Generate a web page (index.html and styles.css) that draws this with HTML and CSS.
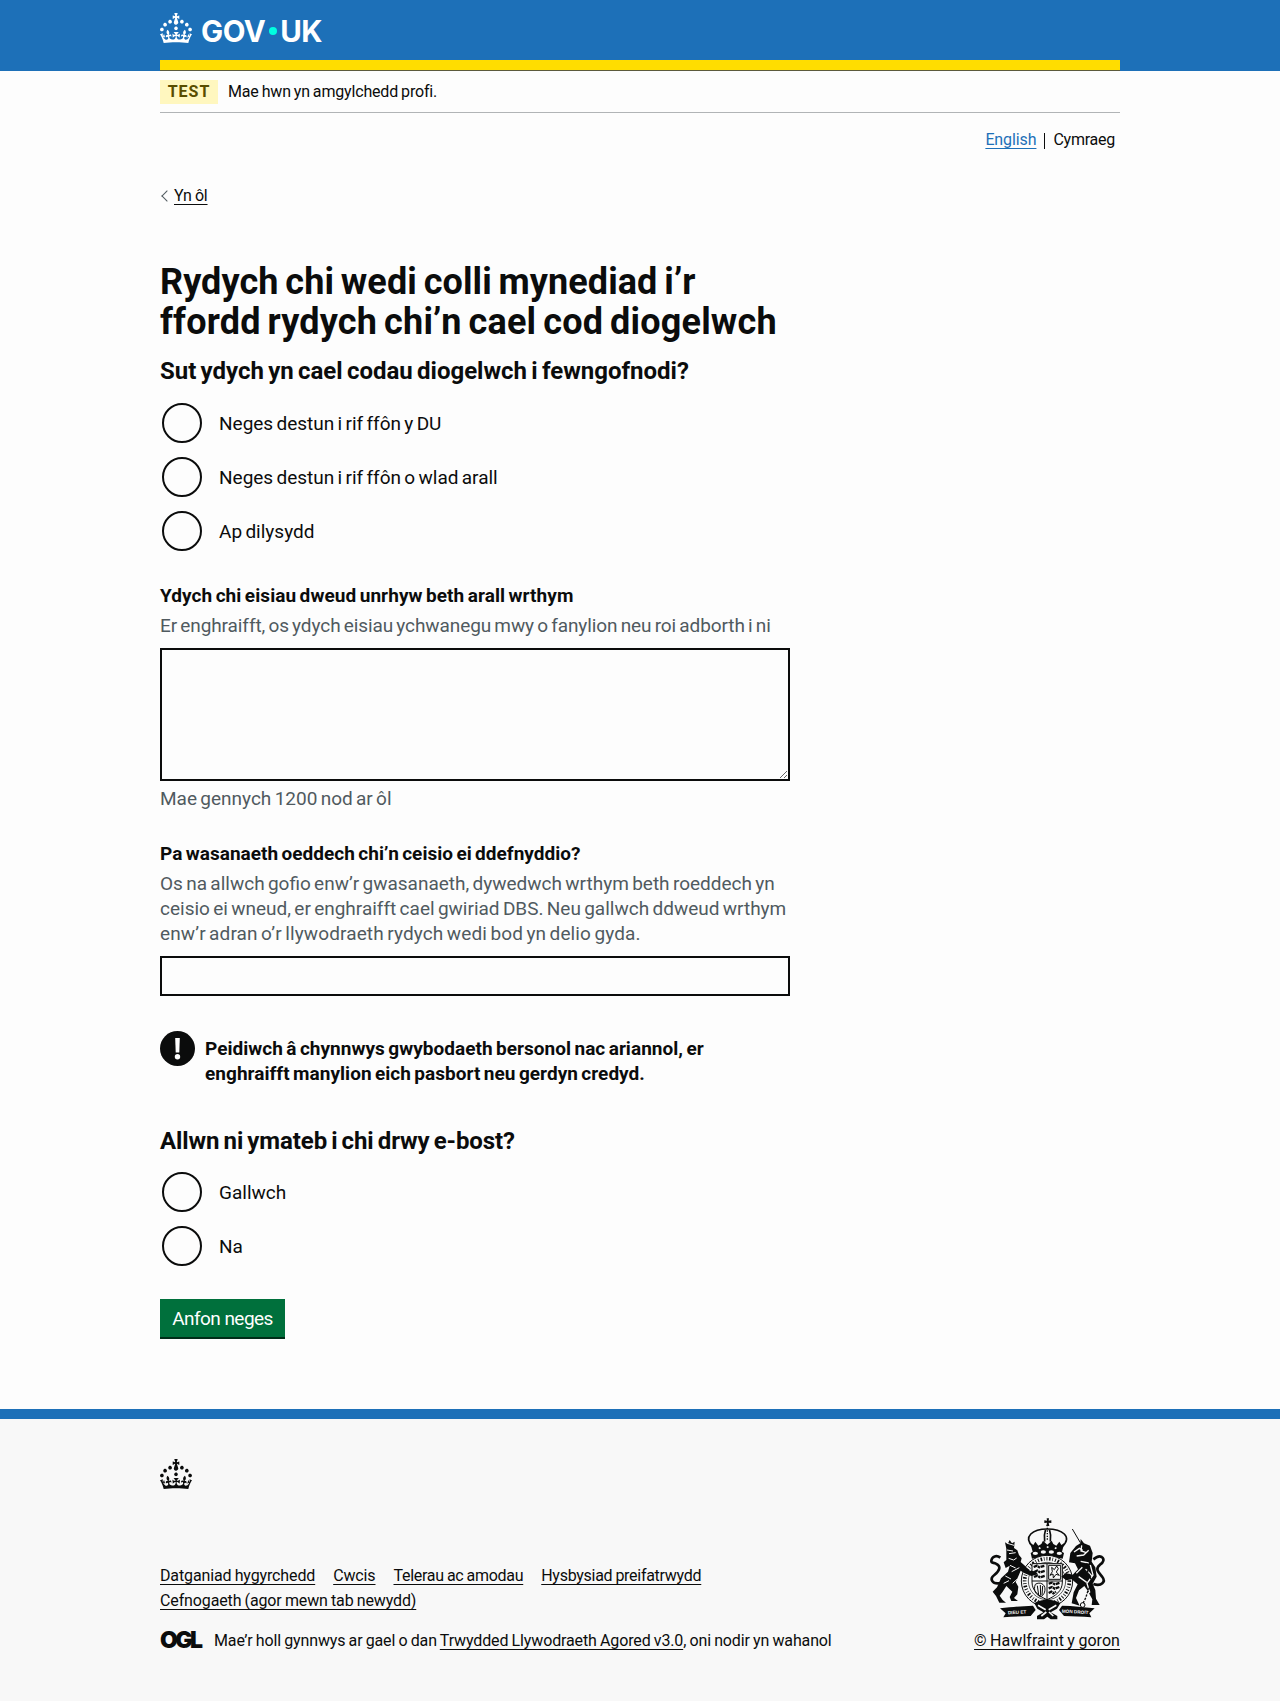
FILE: index.html
```html
<!DOCTYPE html>
<html lang="cy">
<head>
<meta charset="utf-8">
<title>Rydych chi wedi colli mynediad - GOV.UK</title>
<link rel="stylesheet" href="styles.css">
</head>
<body>
<svg class="defs" aria-hidden="true">
  <symbol id="crown" viewBox="0 0 32 30"><path d="M22.6 10.4c-1 .4-2-.1-2.4-1-.4-.9.1-2 1-2.4.9-.4 2 .1 2.4 1s-.1 2-1 2.4m-5.9 6.7c-.9.4-2-.1-2.4-1-.4-.9.1-2 1-2.4.9-.4 2 .1 2.4 1s-.1 2-1 2.4m10.8-3.7c-1 .4-2-.1-2.4-1-.4-.9.1-2 1-2.4.9-.4 2 .1 2.4 1s0 2-1 2.4m3.3 4.8c-1 .4-2-.1-2.4-1-.4-.9.1-2 1-2.4.9-.4 2 .1 2.4 1s-.1 2-1 2.4M17 4.7l2.3 1.2V2.5l-2.3.7-.2-.2.9-3h-3.4l.9 3-.2.2c-.1.1-2.3-.7-2.3-.7v3.4L15 4.7c.1.1.1.2.2.2l-1.3 4c-.1.2-.1.4-.1.6 0 1.1.8 2 1.9 2.2h.7c1-.2 1.9-1.1 1.9-2.1 0-.2 0-.4-.1-.6l-1.3-4c-.1-.2 0-.2.1-.3m-7.6 5.7c.9.4 2-.1 2.4-1 .4-.9-.1-2-1-2.4-.9-.4-2 .1-2.4 1s0 2 1 2.4m-5 3c.9.4 2-.1 2.4-1 .4-.9-.1-2-1-2.4-.9-.4-2 .1-2.4 1s.1 2 1 2.4m-3.2 4.8c.9.4 2-.1 2.4-1 .4-.9-.1-2-1-2.4-.9-.4-2 .1-2.4 1s0 2 1 2.4m14.8 11c4.4 0 8.6.3 12.3.8 1.1-4.5 2.4-7 3.7-8.8l-2.5-.9c.2 1.3.3 1.9 0 2.7-.4-.4-.8-1.1-1.1-2.3l-1.2 4c.7-.5 1.3-.8 2-.9-1.1 2.5-2.6 3.1-3.5 3-1.1-.2-1.7-1.2-1.5-2.1.3-1.2 1.5-1.5 2.1-.1 1.1-2.3-.8-3-2-2.3 1.9-1.9 2.1-3.5.6-5.6-2.1 1.6-2.1 3.2-1.2 5.5-1.2-1.4-3.2-.6-2.5 1.6.9-1.4 2.1-.5 1.9.8-.2 1.1-1.7 2.1-3.5 1.9-2.7-.2-2.9-2.1-2.9-3.6.7-.1 1.9.5 2.9 1.9l.4-4.3c-1.1 1.1-2.1 1.4-3.2 1.4.4-1.2 2.1-3 2.1-3h-5.4s1.7 1.9 2.1 3c-1.1 0-2.1-.2-3.2-1.4l.4 4.3c1-1.4 2.2-2 2.9-1.9-.1 1.5-.2 3.4-2.9 3.6-1.9.2-3.4-.8-3.5-1.9-.2-1.3 1-2.2 1.9-.8.7-2.3-1.2-3-2.5-1.6.9-2.2.9-3.9-1.2-5.5-1.5 2-1.3 3.7.6 5.6-1.2-.7-3.1 0-2 2.3.6-1.4 1.8-1.1 2.1.1.2.9-.3 1.9-1.5 2.1-.9.2-2.4-.5-3.5-3 .6 0 1.2.3 2 .9l-1.2-4c-.3 1.1-.7 1.9-1.1 2.3-.3-.8-.2-1.4 0-2.7l-2.9.9C1.3 23 2.6 25.5 3.7 30c3.7-.5 7.9-.8 12.3-.8"/></symbol>
</svg>

<header class="header">
  <div class="container header-inner">
    <a class="logo" href="#">
      <svg class="crown"><use href="#crown"/></svg>
      <span class="logo-text"><span>GOV</span><i class="logo-dot"></i><span>UK</span></span>
    </a>
  </div>
</header>

<div class="container">
  <div class="phase-banner">
    <strong class="tag">TEST</strong>
    <span class="phase-text">Mae hwn yn amgylchedd profi.</span>
  </div>
  <nav class="languages">
    <a class="language-link" href="#">English</a>
    <span class="language-current">Cymraeg</span>
  </nav>
  <a class="back" href="#"><i class="chevron"></i><span>Yn ôl</span></a>

  <main class="main">
    <h1><span>Rydych chi wedi colli mynediad i’r</span><br><span class="wide">ffordd rydych chi’n cael cod diogelwch</span></h1>

    <h2>Sut ydych yn cael codau diogelwch i fewngofnodi?</h2>
    <div class="radios">
      <label class="radio"><input type="radio" name="method"><span>Neges destun i rif ffôn y DU</span></label>
      <label class="radio"><input type="radio" name="method"><span>Neges destun i rif ffôn o wlad arall</span></label>
      <label class="radio"><input type="radio" name="method"><span>Ap dilysydd</span></label>
    </div>

    <div class="group">
      <label class="label label-wide" for="more">Ydych chi eisiau dweud unrhyw beth arall wrthym</label>
      <p class="hint hint-tight">Er enghraifft, os ydych eisiau ychwanegu mwy o fanylion neu roi adborth i ni</p>
      <textarea id="more" rows="5"></textarea>
      <p class="hint count">Mae gennych 1200 nod ar ôl</p>
    </div>

    <div class="group">
      <label class="label" for="service">Pa wasanaeth oeddech chi’n ceisio ei ddefnyddio?</label>
      <p class="hint">Os na allwch gofio enw’r gwasanaeth, dywedwch wrthym beth roeddech yn<br>ceisio ei wneud, er enghraifft cael gwiriad DBS. Neu gallwch ddweud wrthym<br><span class="hint-wide">enw’r adran o’r llywodraeth rydych wedi bod yn delio gyda.</span></p>
      <input class="text-input" id="service" type="text">
    </div>

    <div class="warning">
      <svg class="warning-icon" viewBox="0 0 35 35"><circle cx="17.5" cy="17.5" r="17.5"/><path d="M15.2 7h4.6l-.5 14.6h-3.6z" fill="#fff"/><circle cx="17.5" cy="25.8" r="2.7" fill="#fff"/></svg>
      <strong>Peidiwch â chynnwys gwybodaeth bersonol nac ariannol, er<br>enghraifft manylion eich pasbort neu gerdyn credyd.</strong>
    </div>

    <h2 class="reply-title">Allwn ni ymateb i chi drwy e-bost?</h2>
    <div class="radios">
      <label class="radio"><input type="radio" name="reply"><span>Gallwch</span></label>
      <label class="radio"><input type="radio" name="reply"><span>Na</span></label>
    </div>

    <button class="button" type="button">Anfon neges</button>
  </main>
</div>

<footer class="footer">
  <div class="container">
    <svg class="crown"><use href="#crown"/></svg>
    <div class="footer-meta">
      <div>
        <ul class="footer-links">
          <li><a href="#">Datganiad hygyrchedd</a></li>
          <li><a href="#">Cwcis</a></li>
          <li class="narrow"><a href="#">Telerau ac amodau</a></li>
          <li class="narrow"><a href="#">Hysbysiad preifatrwydd</a></li>
          <li><a href="#">Cefnogaeth (agor mewn tab newydd)</a></li>
        </ul>
        <div class="licence">
          <span class="ogl">OGL</span>
          <span>Mae’r holl gynnwys ar gael o dan <a href="#">Trwydded Llywodraeth Agored v3.0</a>, oni nodir yn wahanol</span>
        </div>
      </div>
      <div class="copyright">
        <svg class="crest" viewBox="0 0 372 324" fill="#0b0c0c" stroke="#0b0c0c" stroke-width="0">
          <!-- imperial crown -->
          <path d="M185 10h7l-1 7 8-1v8l-8-1 2 10h-9l2-10-8 1v-8l8 1z"/>
          <path d="M144 96C112 64 144 42 187 42s78 22 44 54M182 42c-5 15-5 26-3 38M193 42c5 15 5 26 3 38" fill="none" stroke-width="5"/>
          <path d="M187 30v46" fill="none" stroke-width="4" stroke-dasharray="4 4"/>
          <path d="M136 84l9 6 6-10 9 12 9-5 5-10 13 12 13-12 5 10 9 5 9-12 6 10 9-6-7 26 6 4-4 17c-24-7-68-7-92 0l-4-17 6-4z"/>
          <g fill="#f8f8f8"><ellipse cx="151" cy="115" rx="8" ry="5"/><ellipse cx="175" cy="111" rx="8" ry="5"/><ellipse cx="199" cy="111" rx="8" ry="5"/><ellipse cx="223" cy="115" rx="8" ry="5"/><path d="M160 99l4-3 4 4-4 3zM184 96l4-3 4 3-4 4zM208 100l4-4 4 3-4 4z"/></g>
          <!-- garter and quartered shield -->
          <circle cx="186" cy="198" r="77" fill="#f8f8f8" stroke-width="3"/>
          <circle cx="186" cy="198" r="67" fill="none" stroke-width="11" stroke-dasharray="3 5 5 5 2 6"/>
          <circle cx="186" cy="198" r="56" fill="none" stroke-width="2"/>
          <path d="M141 146h91v55c0 27-20 42-46 53-25-11-45-26-45-53z" fill="#f8f8f8" stroke-width="3"/>
          <path d="M186 146v108M141 198h91" fill="none" stroke-width="3"/>
          <path d="M146 156l10-4 7 5 17-5M147 171l10-4 8 5 16-5M147 186l10-4 8 5 16-5M191 206l10-3 8 5 16-5M191 220l10-4 8 5 14-5M191 234l8-4 6 5 8-5" fill="none" stroke-width="7" stroke-dasharray="12 2 7 2"/>
          <path d="M200 157l8 7 7-11 5 8-6 10 9 10-10-3-8 11-1-12-9 4 7-11zM191 151h36v42h-36z" fill="none" stroke-width="3"/>
          <path d="M151 208c14-9 29 0 29 14s-8 22-14 23c-13-6-22-20-15-37zm6 4l4 28m5-30l1 32m6-29l-2 27" fill="none" stroke-width="3"/>
          <!-- lion -->
          <path d="M64 101l-4-19 8 5 6-12 7 10 8-5-2 19 10 7 5 14 8 10-3 11 11 10 16 16 17 2 8 9-20 5-20-8-12-8-7 17-8 17 8 14-3 23-10 11 12 9H79l-5-12 8-16-18-17-11 17-9 12 9 13 10 8H43l-10-20-10-13 13-13 12-27 21-20 5-18-12 7-6-17 8-7z"/>
          <path d="M48 204c-28 6-35-13-20-24 17-13 21-27 5-34-8-4-15-1-14-9 2-14 16-17 27-9" fill="none" stroke-width="8"/>
          <path d="M66 105l18 3M72 116l20-3M71 130l15 5 9-6M75 151l17 8M80 170l23-12M61 183l17 9M56 205l16-8M83 205l13-12M67 85l20 6" fill="none" stroke="#f8f8f8" stroke-width="3"/>
          <!-- unicorn -->
          <path d="M256 114l17-21 13-8 1-13 10 13 18 7 8 22-3 26 11 17 4 28-12 21 8 19 2 26 11 19h-24l2-17-15-27-9-13-16 13-9 23 11 23-24-7 6-33 12-24-18-15-16 3-15-11 13-11 21 5 16-16-9-18-18-3z"/>
          <path d="M286 83L262 42" fill="none" stroke-width="3"/>
          <path d="M325 207c25 8 38-7 27-21-14-17-22-25-7-37 11-7 14-17 5-23-9-5-16 0-25 7" fill="none" stroke-width="8"/>
          <path d="M267 111l16-11 10 6M290 91l-2 17 14 4M275 123l21-3 15-14M287 139l24 5M292 157l-18 18M302 162l18 20M316 150l8 30-18 25 8 26-16 14M281 185l24 17" fill="none" stroke="#f8f8f8" stroke-width="4"/>
          <path d="M306 144c-6 35 24 45 8 73-10 18-8 29-20 47" fill="none" stroke-width="4" stroke-dasharray="7 4"/>
          <circle cx="293" cy="270" r="7" fill="none" stroke-width="3"/>
          <!-- motto scroll and base -->
          <path d="M45 280c36-4 64-7 99-8l8 13-15 18c-26 1-54 1-82 4l7-12zM329 280c-34-4-64-7-98-8l-9 13 15 18c28 1 53 1 82 4l-6-12z"/>
          <path d="M148 265c16-14 61-14 78 0l-10 16-19 11 20 11v10h-20l-10-8-10 8h-21v-10l19-11-18-11z"/>
          <path d="M159 271l23 13m32-13l-23 13M169 303l15-12m21 12l-13-12" fill="none" stroke="#f8f8f8" stroke-width="5"/>
          <g class="motto"><text x="69" y="298" transform="rotate(-3 69 298)">DIEU ET</text><text x="230" y="293" transform="rotate(3 230 293)">MON DROIT</text></g>
        </svg>
        <a href="#">© Hawlfraint y goron</a>
      </div>
    </div>
  </div>
</footer>
</body>
</html>
```
FILE: styles.css
```css
* { box-sizing: border-box; }
body {
  margin: 0;
  background: #fdfdfd;
  color: #0b0c0c;
  font: 400 19px/25px Roboto, "Liberation Sans", sans-serif;
  word-spacing: -1.4px;
}
h1, h2, p, ul { margin: 0; padding: 0; }
a {
  color: inherit;
  text-decoration: underline;
  text-decoration-thickness: 1px;
  text-underline-offset: 3px;
  text-decoration-skip-ink: none;
}
.defs { display: none; }
.container { width: 960px; margin: 0 auto; }
.crown { display: block; width: 32px; height: 30px; fill: currentColor; }

.header { height: 71px; background: #1d70b8; color: #fff; }
.header-inner { height: 71px; padding-top: 13px; border-bottom: 1px solid #5c5a3c; box-shadow: inset 0 -10px #ffdd00; }
.logo { display: flex; width: max-content; text-decoration: none; }
.logo-text {
  display: flex;
  margin-left: 9px;
  font: 700 29.5px/36px Inter, sans-serif;
  letter-spacing: -.5px;
}
.logo-dot { width: 8px; height: 8px; margin: 14px 3px 0 4px; border-radius: 50%; background: #00ffe0; }

.phase-banner {
  display: flex;
  align-items: center;
  height: 42px;
  padding-top: 1px;
  border-bottom: 1px solid #b1b4b6;
  font-size: 16px;
  line-height: 20px;
}
.tag {
  width: 58px;
  height: 24px;
  background: #fff7bf;
  color: #594d00;
  font-size: 16px;
  line-height: 24px;
  letter-spacing: 1px;
  text-align: center;
}
.phase-text { margin-left: 10px; letter-spacing: -.17px; word-spacing: -.8px; }
.languages {
  display: flex;
  justify-content: flex-end;
  padding: 17px 5px 0 0;
  font-size: 16px;
  line-height: 20px;
}
.language-link { padding-right: 8px; color: #1d70b8; letter-spacing: -.1px; }
.language-current { position: relative; padding-left: 9px; letter-spacing: -.25px; }
.language-current::before { content: ""; position: absolute; left: 0; top: 3px; width: 1px; height: 16px; background: #0b0c0c; }
.back {
  display: flex;
  align-items: center;
  width: max-content;
  margin-top: 36px;
  font-size: 16px;
  line-height: 20px;
  letter-spacing: -.2px;
  word-spacing: -.6px;
  text-decoration: none;
}
.back span { text-decoration: underline; text-decoration-thickness: 1px; text-underline-offset: 3px; }
.chevron { width: 8px; height: 8px; margin: 0 3px; border: solid #505a5f; border-width: 0 0 1px 1px; transform: rotate(45deg); }

.main { width: 630px; padding-top: 56px; }
h1 { font-size: 36px; line-height: 40px; letter-spacing: .08px; word-spacing: -2.2px; white-space: nowrap; }
h1 .wide { letter-spacing: .19px; }
h2 { margin: 14px 0 17px; font-size: 24px; line-height: 30px; word-spacing: -1.7px; white-space: nowrap; }
.radios { display: grid; gap: 14px; }
.radio { display: flex; align-items: center; height: 40px; padding-left: 2px; }
.radio input { appearance: none; width: 40px; height: 40px; margin: 0 17px 0 0; border: 2px solid #0b0c0c; border-radius: 50%; }
.group { display: flex; flex-direction: column; margin-top: 32px; }
.group + .group { margin-top: 30px; }
.label { font-weight: 700; letter-spacing: .03px; }
.label-wide { letter-spacing: .08px; }
.hint { margin: 5px 0 10px; color: #505a5f; white-space: nowrap; }
.hint-tight { letter-spacing: -.09px; }
.hint-wide { letter-spacing: .12px; }
textarea { height: 133px; margin: 0; border: 2px solid #0b0c0c; background: transparent; }
.count { margin: 5px 0 0; }
.text-input { height: 40px; border: 2px solid #0b0c0c; background: transparent; }
.warning { display: flex; gap: 10px; margin-top: 35px; height: 54px; white-space: nowrap; letter-spacing: .04px; }
.warning-icon { width: 35px; height: 35px; fill: #0b0c0c; }
.warning strong { padding-top: 5px; }
.reply-title { margin: 41px 0 16px; letter-spacing: -.1px; }
.button {
  display: block;
  width: 125px;
  height: 40px;
  margin-top: 33px;
  padding: 0 0 2px;
  border: 0;
  background: #00703c;
  box-shadow: inset 0 -2px #002d18;
  color: #fff;
  font: inherit;
  letter-spacing: -.55px;
}

.footer {
  height: 292px;
  margin-top: 70px;
  padding-top: 40px;
  border-top: 10px solid #1d70b8;
  background: #f8f8f8;
  font-size: 16px;
  line-height: 25px;
  letter-spacing: -.13px;
  word-spacing: -.6px;
}
.footer-meta { display: flex; justify-content: space-between; align-items: flex-end; margin-top: 29px; height: 135px; }
.footer-links { display: flex; flex-wrap: wrap; column-gap: 18px; width: 600px; list-style: none; }
.narrow { letter-spacing: -.28px; }
.licence { display: flex; align-items: center; margin-top: 15px; height: 25px; white-space: nowrap; }
.ogl { width: 54px; font: 900 23px/25px Inter, sans-serif; letter-spacing: -2.6px; }
.copyright { display: flex; flex-direction: column; align-items: center; letter-spacing: .05px; }
.crest { display: block; width: 124px; height: 108px; margin-bottom: 5px; }
.motto { fill: #f8f8f8; font: 700 14px "Liberation Sans", sans-serif; letter-spacing: 0; word-spacing: 0; }
```
